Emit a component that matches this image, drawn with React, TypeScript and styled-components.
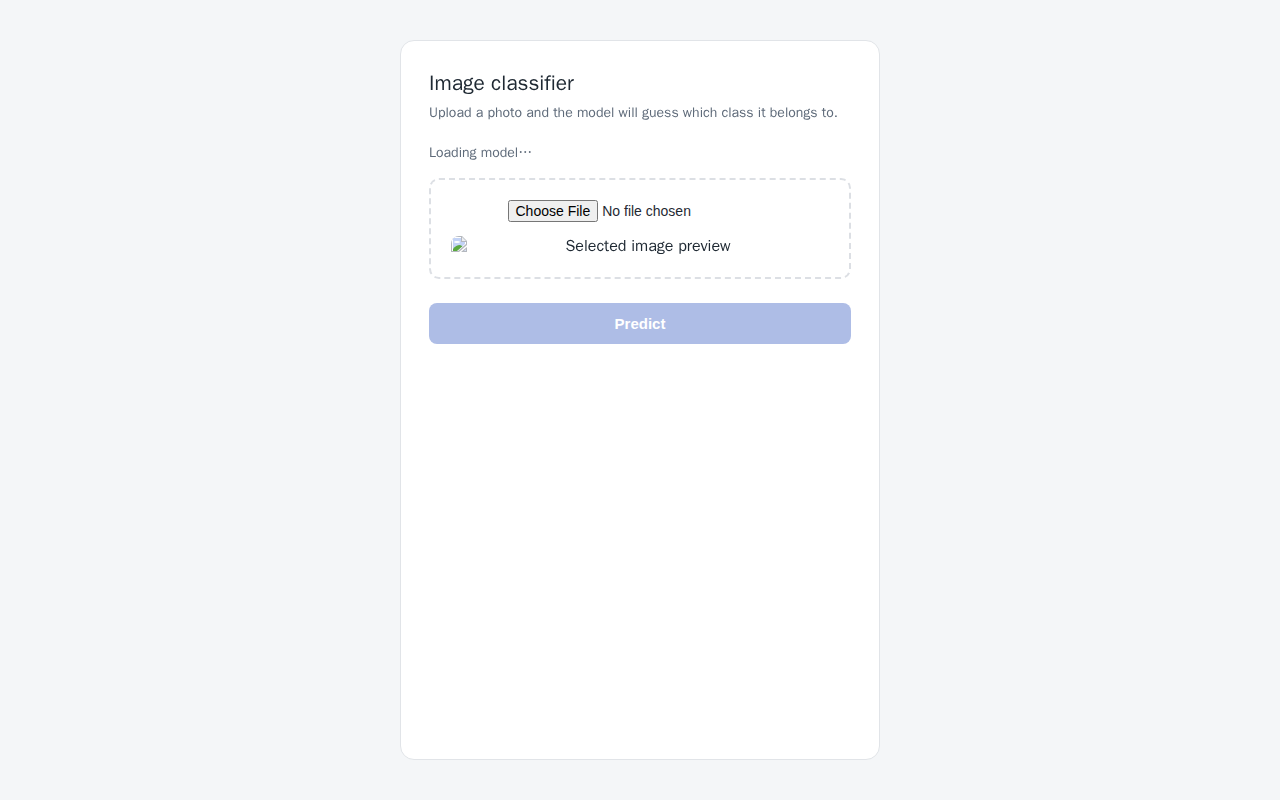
import React from "react";
import styled, { createGlobalStyle } from "styled-components";

const GlobalStyle = createGlobalStyle`
  *, *::before, *::after {
    box-sizing: border-box;
  }

  body {
    margin: 0;
    background: #f4f6f8;
    color: #1f2933;
    font-family: "WenQuanYi Zen Hei", "Liberation Sans", sans-serif;
    font-size: 16px;
  }
`;

const Page = styled.div`
  display: flex;
  justify-content: center;
  min-height: 100vh;
  padding: 40px 16px;
`;

const Card = styled.main`
  width: 100%;
  max-width: 480px;
  padding: 28px;
  background: #ffffff;
  border: 1px solid #e1e4e8;
  border-radius: 14px;
`;

const Title = styled.h1`
  margin: 0 0 6px;
  font-size: 21px;
  font-weight: 500;
  line-height: 28px;
`;

const Subtitle = styled.p`
  margin: 0 0 20px;
  color: #5f6b7a;
  font-size: 14px;
  line-height: 20px;
`;

const Status = styled.p`
  margin: 0 0 15px;
  color: #5f6b7a;
  font-size: 14px;
  line-height: 20px;
`;

const Dropzone = styled.section`
  margin-bottom: 24px;
  padding: 20px;
  border: 2px dashed #dcdfe4;
  border-radius: 10px;
  text-align: center;
`;

const FileInput = styled.input`
  font-family: "Liberation Sans", Arial, sans-serif;
  font-size: 14px;
`;

const Preview = styled.figure`
  display: flex;
  align-items: flex-start;
  margin: 14px 0 0;
`;

const PreviewCaption = styled.figcaption`
  flex: 1;
  line-height: 21px;
`;

const PredictButton = styled.button`
  display: block;
  width: 100%;
  padding: 12px;
  border: 0;
  border-radius: 8px;
  background: #aebde6;
  color: #ffffff;
  font-family: "Liberation Sans", Arial, sans-serif;
  font-size: 15px;
  font-weight: 600;
`;

function BrokenImageIcon() {
  return (
    <svg width="16" height="16" viewBox="0 0 16 16" aria-hidden="true">
      <defs>
        <clipPath id="previewCorner">
          <path d="M8 0H16V16H0V8A8 8 0 0 1 8 0Z" />
        </clipPath>
        <clipPath id="previewPhoto">
          <path d="M2 2H10V6H14V8L6 15H2Z" />
        </clipPath>
      </defs>
      <g clipPath="url(#previewCorner)">
        <path d="M0 0H11L16 5V9L8 16H0Z" fill="#b4b8be" />
        <path d="M1 1H10V6H15V8L7 15H1Z" fill="#ffffff" />
        <g clipPath="url(#previewPhoto)">
          <path d="M2 2H14V14H2Z" fill="#c3d3f6" />
          <ellipse cx="6" cy="6" rx="3" ry="1" fill="#ffffff" />
          <path d="M2 15V13Q5 9 9 9L13 11V15Z" fill="#5aa83f" />
        </g>
        <path d="M11 1L15 5H11Z" fill="#eceef1" />
        <path d="M16 11V16H10Z" fill="#b4b8be" />
        <path d="M15 13V15H13Z" fill="#d9e3f5" />
      </g>
    </svg>
  );
}

export default function App() {
  return (
    <>
      <GlobalStyle />
      <Page>
        <Card>
          <Title>Image classifier</Title>
          <Subtitle>Upload a photo and the model will guess which class it belongs to.</Subtitle>
          <Status role="status">Loading model…</Status>
          <Dropzone>
            <FileInput type="file" accept="image/*" aria-label="Choose a photo" />
            <Preview>
              <BrokenImageIcon />
              <PreviewCaption>Selected image preview</PreviewCaption>
            </Preview>
          </Dropzone>
          <PredictButton type="button" disabled>
            Predict
          </PredictButton>
        </Card>
      </Page>
    </>
  );
}
